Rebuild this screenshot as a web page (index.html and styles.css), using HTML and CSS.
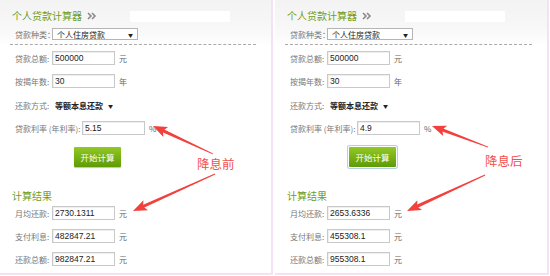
FILE: index.html
```html
<!DOCTYPE html>
<html lang="zh-CN">
<head>
  <meta charset="UTF-8">
  <title>个人贷款计算器</title>
  <link rel="stylesheet" href="styles.css">
</head>
<body>
  <div class="page">

    <!-- Before rate cut -->
    <div class="panel">
      <div class="calc-head">
        <h2 class="calc-title">个人贷款计算器</h2>
        <svg class="more" width="10" height="8" viewBox="0 0 10 8"><path d="M1 1l3 3-3 3M5 1l3 3-3 3" fill="none" stroke="#8a8a8a" stroke-width="1.6"/></svg>
        <span class="mask"></span>
      </div>
      <div class="type-row">
        <span class="label">贷款种类：</span>
        <div class="select">个人住房贷款<span class="caret">▼</span></div>
      </div>
      <div class="dash"></div>

      <div class="row first">
        <span class="label">贷款总额:</span>
        <div class="field">500000</div>
        <span class="unit">元</span>
      </div>
      <div class="row">
        <span class="label">按揭年数:</span>
        <div class="field">30</div>
        <span class="unit">年</span>
      </div>
      <div class="row mode">
        <span class="label">还款方式:</span>
        <span class="mode-value">等额本息还款<span class="caret">▼</span></span>
      </div>
      <div class="row">
        <span class="label wide">贷款利率 (年利率):</span>
        <div class="field">5.15</div>
        <span class="unit">%</span>
      </div>
      <div class="actions">
        <button class="btn">开始计算</button>
      </div>

      <h3 class="result-title">计算结果</h3>
      <div class="row tight">
        <span class="label">月均还款:</span>
        <div class="field">2730.1311</div>
        <span class="unit">元</span>
      </div>
      <div class="row">
        <span class="label">支付利息:</span>
        <div class="field">482847.21</div>
        <span class="unit">元</span>
      </div>
      <div class="row">
        <span class="label">还款总额:</span>
        <div class="field">982847.21</div>
        <span class="unit">元</span>
      </div>

      <!-- annotation -->
      <svg class="notes" width="273" height="273" viewBox="0 0 273 273">
        <g transform="translate(153,126) rotate(25)">
          <polygon points="10,-1.6 66,-0.5 66,0.5 10,1.6"/>
          <polygon points="0,0 14,-5.5 11,0 14,5.5"/>
        </g>
        <g transform="translate(133,211) rotate(-24.3)">
          <polygon points="10,-1.6 90,-0.5 90,0.5 10,1.6"/>
          <polygon points="0,0 14,-5.5 11,0 14,5.5"/>
        </g>
      </svg>
      <span class="note-text left">降息前</span>
    </div>

    <!-- After rate cut -->
    <div class="panel right">
      <div class="calc-head">
        <h2 class="calc-title">个人贷款计算器</h2>
        <svg class="more" width="10" height="8" viewBox="0 0 10 8"><path d="M1 1l3 3-3 3M5 1l3 3-3 3" fill="none" stroke="#8a8a8a" stroke-width="1.6"/></svg>
        <span class="mask"></span>
      </div>
      <div class="type-row">
        <span class="label">贷款种类：</span>
        <div class="select">个人住房贷款<span class="caret">▼</span></div>
      </div>
      <div class="dash"></div>

      <div class="row first">
        <span class="label">贷款总额:</span>
        <div class="field">500000</div>
        <span class="unit">元</span>
      </div>
      <div class="row">
        <span class="label">按揭年数:</span>
        <div class="field">30</div>
        <span class="unit">年</span>
      </div>
      <div class="row mode">
        <span class="label">还款方式:</span>
        <span class="mode-value">等额本息还款<span class="caret">▼</span></span>
      </div>
      <div class="row">
        <span class="label wide">贷款利率 (年利率):</span>
        <div class="field">4.9</div>
        <span class="unit">%</span>
      </div>
      <div class="actions">
        <button class="btn focus">开始计算</button>
      </div>

      <h3 class="result-title">计算结果</h3>
      <div class="row tight">
        <span class="label">月均还款:</span>
        <div class="field">2653.6336</div>
        <span class="unit">元</span>
      </div>
      <div class="row">
        <span class="label">支付利息:</span>
        <div class="field">455308.1</div>
        <span class="unit">元</span>
      </div>
      <div class="row">
        <span class="label">还款总额:</span>
        <div class="field">955308.1</div>
        <span class="unit">元</span>
      </div>

      <svg class="notes" width="273" height="273" viewBox="0 0 273 273">
        <g transform="translate(157,126) rotate(20.6)">
          <polygon points="10,-1.6 60,-0.5 60,0.5 10,1.6"/>
          <polygon points="0,0 14,-5.5 11,0 14,5.5"/>
        </g>
        <g transform="translate(132,211) rotate(-24.8)">
          <polygon points="10,-1.6 86,-0.5 86,0.5 10,1.6"/>
          <polygon points="0,0 14,-5.5 11,0 14,5.5"/>
        </g>
      </svg>
      <span class="note-text right-note">降息后</span>
    </div>

  </div>
</body>
</html>
```

FILE: styles.css
```css
body {
  margin: 0;
  background: #fff;
  font-family: "Noto Sans CJK SC", "Liberation Sans", sans-serif;
  color: #666;
}

.page {
  display: flex;
  gap: 2px;
  width: 550px;
  height: 276px;
}

/* Calculator panel */
.panel {
  position: relative;
  width: 271px;
  height: 273px;
  border-right: 2px solid #f4e1f4;
  border-bottom: 2px solid #f4e1f4;
  background: linear-gradient(to bottom, #f3f3f3 0, #f7f7f7 26px, #fbfbfb 38px, #fff 46px);
}

.panel.right {
  width: 272px;
}

.calc-head {
  display: flex;
  align-items: center;
  height: 16px;
  padding: 8px 0 0 12px;
}

.calc-title {
  margin: 0;
  font-size: 10px;
  font-weight: normal;
  line-height: 16px;
  color: #6f9d22;
}

.more {
  margin-left: 5px;
}

/* white block over the header */
.mask {
  width: 100px;
  height: 11px;
  margin-left: 33px;
  background: #fff;
}

.type-row {
  display: flex;
  align-items: center;
  margin-top: 4px;
  padding-left: 15px;
  height: 12px;
}

.label {
  width: 37px;
  font-size: 8px;
  color: #777;
  white-space: nowrap;
}

.label.wide {
  width: 67px;
}

.select {
  display: flex;
  align-items: center;
  box-sizing: border-box;
  width: 86px;
  height: 12px;
  padding-left: 4px;
  border: 1px solid #b5b5b5;
  background: #fff;
  font-size: 8px;
  color: #222;
}

.caret {
  margin-left: auto;
  margin-right: 4px;
  font-size: 5px;
  color: #222;
}

.dash {
  margin: 4px 15px 0 10px;
  border-top: 1px dashed #aaa;
}

/* form rows */
.row {
  display: flex;
  align-items: center;
  height: 14px;
  margin-top: 9px;
  padding-left: 15px;
}

.row.first {
  margin-top: 6px;
}

.row.mode {
  margin-top: 10px;
}

.row.tight {
  margin-top: 3px;
}

.field {
  box-sizing: border-box;
  width: 63px;
  height: 14px;
  padding-left: 2px;
  border: 1px solid #c9c9c9;
  box-shadow: inset 1px 1px 1px #eee;
  background: #fff;
  font-family: "Liberation Sans", Arial, sans-serif;
  font-size: 8.5px;
  line-height: 12px;
  color: #222;
}

.unit {
  margin-left: 4px;
  font-size: 8px;
  color: #666;
}

.mode-value {
  display: flex;
  align-items: center;
  margin-left: 3px;
  font-size: 8px;
  font-weight: bold;
  color: #222;
}

.mode-value .caret {
  margin-left: 5px;
}

.actions {
  margin-top: 12px;
  padding-left: 74px;
}

.btn {
  display: block;
  width: 47px;
  height: 20px;
  padding: 0;
  border: none;
  border-radius: 1px;
  background: linear-gradient(to bottom, #93c925 0, #78b213 50%, #5f9a08 100%);
  box-shadow: 0 1px 1px rgba(0, 0, 0, 0.25);
  font-family: "Noto Sans CJK SC", sans-serif;
  font-size: 8.5px;
  color: #fff;
}

.btn.focus {
  box-shadow: 0 0 0 1px #fff, 0 0 0 2px #b4cfee;
}

.result-title {
  margin: 22px 0 0 12px;
  font-size: 10px;
  font-weight: normal;
  line-height: 14px;
  color: #6f9d22;
}

/* red annotations */
.notes {
  position: absolute;
  top: 0;
  left: 0;
  fill: #f2403c;
  pointer-events: none;
}

.note-text {
  position: absolute;
  font-size: 12.5px;
  line-height: 14px;
  color: #f4504c;
}

.note-text.left {
  top: 157px;
  left: 197px;
}

.note-text.right-note {
  top: 154px;
  left: 210px;
}
```
